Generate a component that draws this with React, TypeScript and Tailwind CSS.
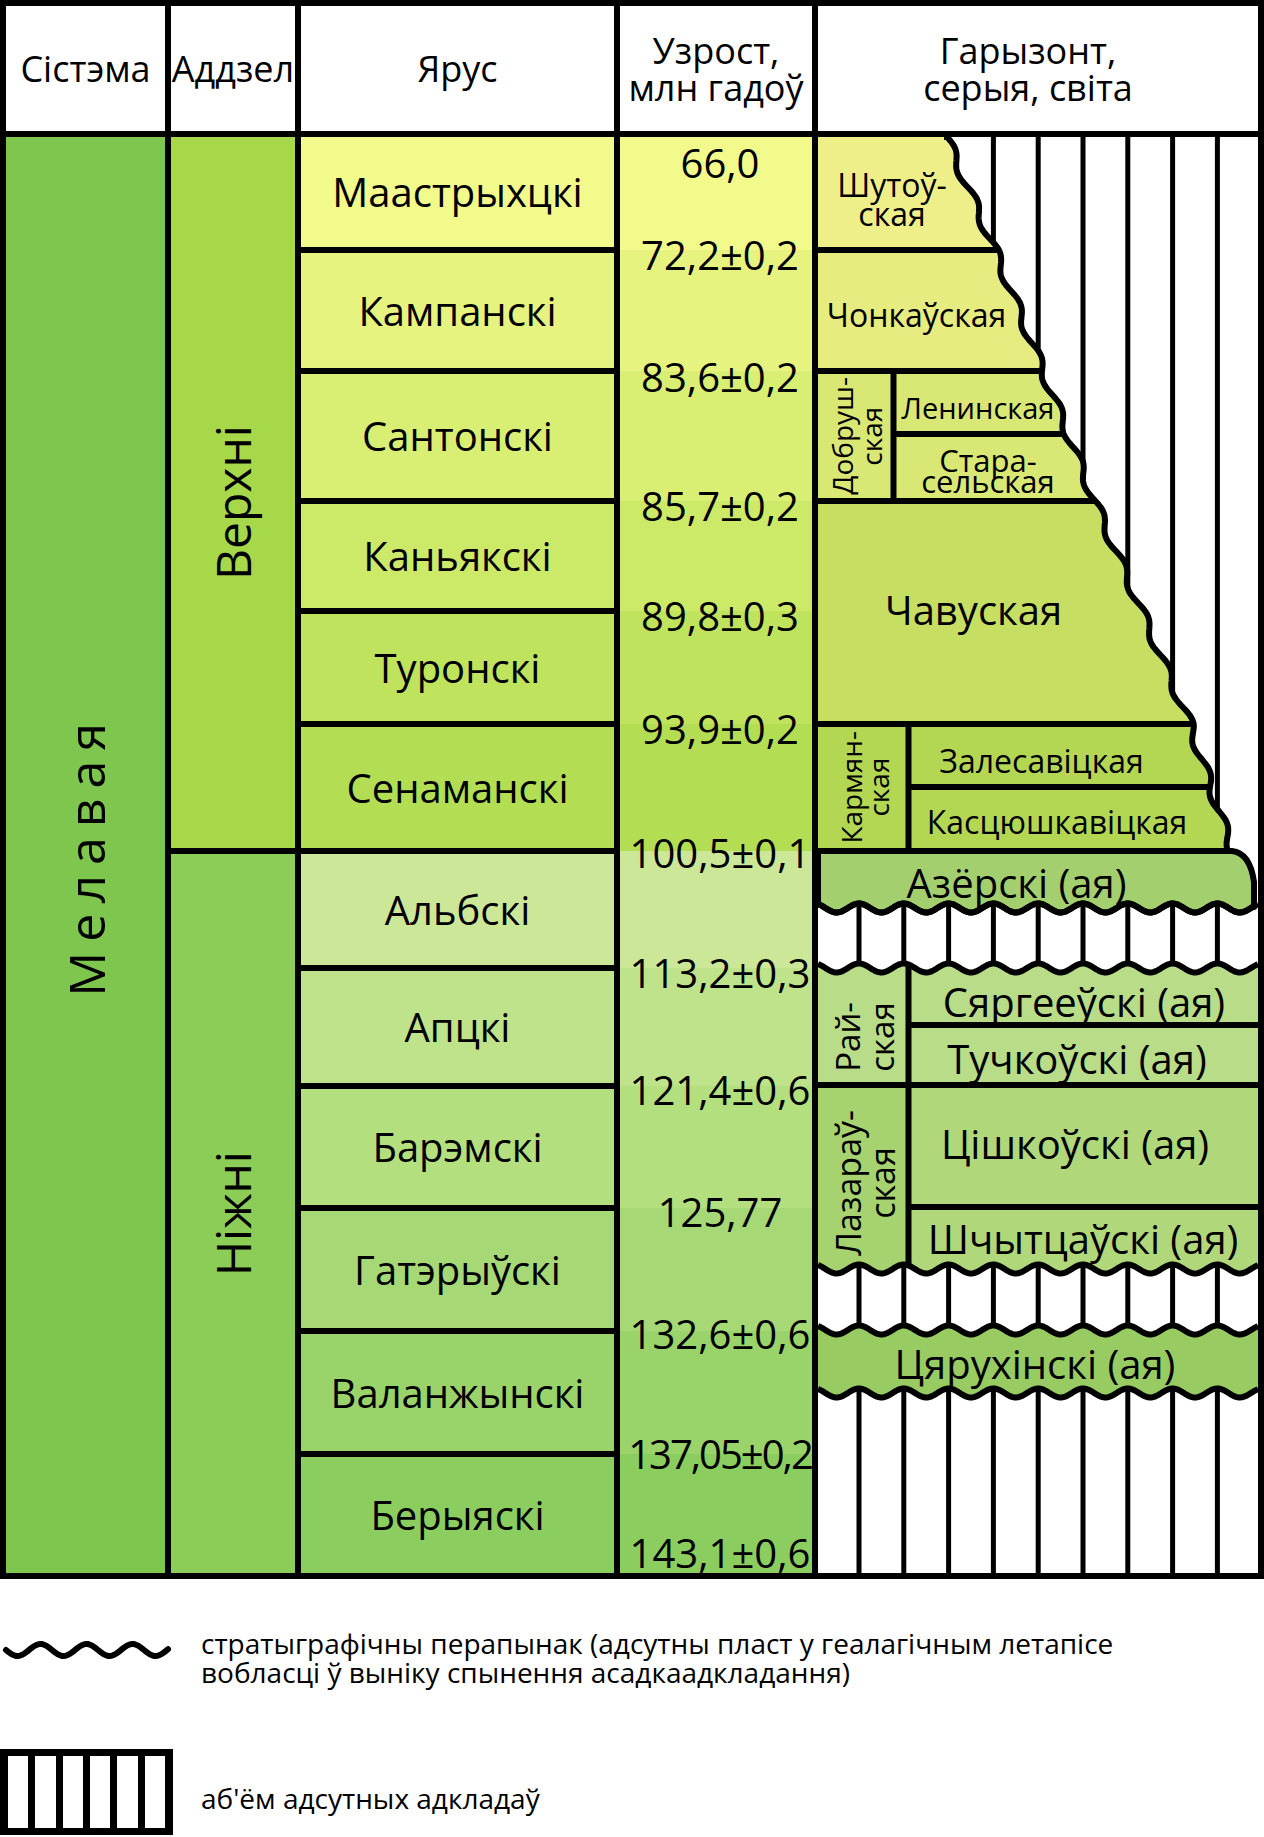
import React from "react";

const stages = [
  { name: "Маастрыхцкі", cls: "h-[116px] border-b-[6px] bg-[#f2fa8c]" },
  { name: "Кампанскі", cls: "h-[121px] border-b-[6px] bg-[#e6f47f]" },
  { name: "Сантонскі", cls: "h-[130px] border-b-[6px] bg-[#d9ef74]" },
  { name: "Каньякскі", cls: "h-[110px] border-b-[6px] bg-[#cce968]" },
  { name: "Туронскі", cls: "h-[113px] border-b-[6px] bg-[#bfe35d]" },
  { name: "Сенаманскі", cls: "h-[127px] border-b-[6px] bg-[#b3de53]" },
  { name: "Альбскі", cls: "h-[117px] border-b-[6px] bg-[#cce797]" },
  { name: "Апцкі", cls: "h-[118px] border-b-[6px] bg-[#bfe38a]" },
  { name: "Барэмскі", cls: "h-[122px] border-b-[6px] bg-[#b3df7f]" },
  { name: "Гатэрыўскі", cls: "h-[123px] border-b-[6px] bg-[#a6d975]" },
  { name: "Валанжынскі", cls: "h-[123px] border-b-[6px] bg-[#99d36a]" },
  { name: "Берыяскі", cls: "h-[116px] bg-[#8ccd60]" },
];

const bands = [
  "h-[113px] bg-[#f2fa8c]",
  "h-[121px] bg-[#e6f47f]",
  "h-[130px] bg-[#d9ef74]",
  "h-[110px] bg-[#cce968]",
  "h-[113px] bg-[#bfe35d]",
  "h-[127px] bg-[#b3de53]",
  "h-[117px] bg-[#cce797]",
  "h-[118px] bg-[#bfe38a]",
  "h-[122px] bg-[#b3df7f]",
  "h-[123px] bg-[#a6d975]",
  "h-[123px] bg-[#99d36a]",
  "h-[119px] bg-[#8ccd60]",
];

const ages = [
  { t: "66,0", cls: "top-[6px]" },
  { t: "72,2±0,2", cls: "top-[98px]" },
  { t: "83,6±0,2", cls: "top-[220px]" },
  { t: "85,7±0,2", cls: "top-[349px]" },
  { t: "89,8±0,3", cls: "top-[459px]" },
  { t: "93,9±0,2", cls: "top-[572px]" },
  { t: "100,5±0,1", cls: "top-[696px]" },
  { t: "113,2±0,3", cls: "top-[816px]" },
  { t: "121,4±0,6", cls: "top-[933px]" },
  { t: "125,77", cls: "top-[1055px]" },
  { t: "132,6±0,6", cls: "top-[1177px]" },
  { t: "137,05±0,2", cls: "top-[1297px] tracking-[-2px]" },
  { t: "143,1±0,6", cls: "top-[1396px]" },
];

// drawing helpers for the horizon column (local coords 440 x 1436)
const EDGE = [
  [128, 0],
  [176, 111],
  [225, 234],
  [276, 363],
  [372, 587],
  [393, 650],
  [414, 714],
];

function edgeX(y: number) {
  for (let i = 0; i < EDGE.length - 1; i++) {
    const [x0, y0] = EDGE[i];
    const [x1, y1] = EDGE[i + 1];
    if (y <= y1) return x0 + ((x1 - x0) * (y - y0)) / (y1 - y0);
  }
  return 414;
}

const edgePts: string[] = [];
for (let y = 0; y <= 714; y += 2) {
  const x = edgeX(y) + 4.2 * Math.sin((2 * Math.PI * y) / 52 + 0.24);
  edgePts.push(`${x.toFixed(1)},${y}`);
}
const edgeLine = "M126,0 L" + edgePts.join(" L");

const HATCH = [41, 85.8, 130.6, 175.4, 220.2, 265, 309.8, 354.6, 399.4];

function wave(c: number, from: number, to: number) {
  const pts: string[] = [];
  const step = from < to ? 2 : -2;
  for (let x = from; step > 0 ? x <= to : x >= to; x += step) {
    const y = c - 4.5 * Math.cos((2 * Math.PI * (x - 41)) / 44.8);
    pts.push(`${x},${y.toFixed(1)}`);
  }
  return pts.join(" L");
}

const upperClip = `M0,0 L126,0 L${edgePts.join(" L")} L0,714 Z`;
const azerski = `M0,714 L414,714 Q432,716 436,745 L436,770 L${wave(771, 436, 0)} Z`;
const lowerBlock = `M${wave(831, 0, 440)} L${wave(1132, 440, 0)} Z`;
const tsiaruhin = `M${wave(1193, 0, 440)} L${wave(1256, 440, 0)} Z`;

function HorizonDrawing() {
  return (
    <svg
      className="absolute inset-0"
      width={440}
      height={1436}
      viewBox="0 0 440 1436"
    >
      <defs>
        <clipPath id="upper">
          <path d={upperClip} />
        </clipPath>
        <clipPath id="lower">
          <path d={lowerBlock} />
        </clipPath>
      </defs>
      <rect x={0} y={0} width={440} height={1436} fill="#ffffff" />
      {HATCH.map((x) => (
        <line key={x} x1={x} y1={0} x2={x} y2={1436} stroke="#000" strokeWidth={5} />
      ))}

      <g clipPath="url(#upper)">
        <rect x={0} y={0} width={440} height={113} fill="#efef8a" />
        <rect x={0} y={113} width={440} height={121} fill="#e6ec7f" />
        <rect x={0} y={234} width={440} height={130} fill="#d9e874" />
        <rect x={0} y={364} width={440} height={223} fill="#c6df62" />
        <rect x={0} y={587} width={440} height={127} fill="#b3d753" />
        <g stroke="#000" strokeWidth={6}>
          <line x1={0} y1={113} x2={440} y2={113} />
          <line x1={0} y1={234} x2={440} y2={234} />
          <line x1={75.5} y1={297} x2={440} y2={297} />
          <line x1={0} y1={364} x2={440} y2={364} />
          <line x1={0} y1={587} x2={440} y2={587} />
          <line x1={90.5} y1={650} x2={440} y2={650} />
          <line x1={75.5} y1={234} x2={75.5} y2={364} />
          <line x1={90.5} y1={587} x2={90.5} y2={714} />
        </g>
      </g>
      <path d={edgeLine} fill="none" stroke="#000" strokeWidth={6} strokeLinejoin="round" />

      <path d={azerski} fill="#a3cf6e" stroke="#000" strokeWidth={6} strokeLinejoin="round" />

      <g clipPath="url(#lower)">
        <rect x={0} y={800} width={440} height={148} fill="#b9dc88" />
        <rect x={0} y={948} width={440} height={200} fill="#b0d87b" />
        <rect x={0} y={948} width={90} height={200} fill="#a6d270" />
        <g stroke="#000" strokeWidth={6}>
          <line x1={90.5} y1={888} x2={440} y2={888} />
          <line x1={0} y1={948} x2={440} y2={948} />
          <line x1={90.5} y1={1070} x2={440} y2={1070} />
          <line x1={90.5} y1={800} x2={90.5} y2={1150} />
        </g>
      </g>
      <path d={tsiaruhin} fill="#98cc62" />

      <g fill="none" stroke="#000" strokeWidth={6} strokeLinejoin="round">
        <path d={`M${wave(771, 0, 440)}`} />
        <path d={`M${wave(831, 0, 440)}`} />
        <path d={`M${wave(1132, 0, 440)}`} />
        <path d={`M${wave(1193, 0, 440)}`} />
        <path d={`M${wave(1256, 0, 440)}`} />
      </g>
    </svg>
  );
}

function VText({ lines, cls }: { lines: string[]; cls: string }) {
  return (
    <div className={`[writing-mode:vertical-rl] rotate-180 text-center whitespace-nowrap ${cls}`}>
      {lines.map((l) => (
        <div key={l}>{l}</div>
      ))}
    </div>
  );
}

function Horizons() {
  return (
    <div className="relative w-[440px] h-[1436px]">
      <HorizonDrawing />
      <div className="relative flex flex-col h-full whitespace-nowrap">
        <div className="h-[113px] w-[148px] flex flex-col items-center justify-center pt-[11px] text-[32px] leading-[29px]">
          <span>Шутоў-</span>
          <span>ская</span>
        </div>
        <div className="h-[121px] w-[197px] flex items-center justify-center pt-[9px] text-[32px] leading-none">
          Чонкаўская
        </div>
        <div className="h-[130px] flex">
          <div className="w-[78px] flex items-center justify-center">
            <VText lines={["Добруш-", "ская"]} cls="text-[28px] leading-[29px]" />
          </div>
          <div className="flex flex-col">
            <div className="h-[63px] w-[164px] flex items-center justify-center pt-[10px] text-[29px] leading-none">
              Ленинская
            </div>
            <div className="h-[67px] w-[184px] flex flex-col items-center justify-center pt-[7px] text-[31px] leading-[21px]">
              <span>Стара-</span>
              <span>сельская</span>
            </div>
          </div>
        </div>
        <div className="h-[223px] w-[311px] flex items-center justify-center pb-[5px] text-[40px] leading-none">
          Чавуская
        </div>
        <div className="h-[127px] flex">
          <div className="w-[94px] flex items-center justify-center">
            <VText lines={["Кармян-", "ская"]} cls="text-[28px] leading-[27px]" />
          </div>
          <div className="flex flex-col">
            <div className="h-[63px] w-[259px] flex items-center justify-center pt-[11px] text-[32px] leading-none">
              Залесавіцкая
            </div>
            <div className="h-[64px] w-[290px] flex items-center justify-center pt-[5px] text-[32px] leading-none">
              Касцюшкавіцкая
            </div>
          </div>
        </div>
        <div className="h-[57px] w-[397px] flex items-center justify-center pt-[6px] text-[40px] leading-none">
          Азёрскі (ая)
        </div>
        <div className="h-[60px]" />
        <div className="h-[117px] flex">
          <div className="w-[94px] flex items-center justify-center pt-[20px]">
            <VText lines={["Рай-", "ская"]} cls="text-[33px] leading-[34px]" />
          </div>
          <div className="flex flex-col">
            <div className="h-[57px] w-[344px] flex items-center justify-center pt-[10px] text-[40px] leading-none">
              Сяргееўскі (ая)
            </div>
            <div className="h-[60px] w-[330px] flex items-center justify-center pt-[7px] text-[40px] leading-none">
              Тучкоўскі (ая)
            </div>
          </div>
        </div>
        <div className="h-[184px] flex">
          <div className="w-[94px] flex items-center justify-center pt-[12px]">
            <VText lines={["Лазараў-", "ская"]} cls="text-[34px] leading-[34px]" />
          </div>
          <div className="flex flex-col">
            <div className="h-[122px] w-[326px] flex items-center justify-center pb-[5px] text-[40px] leading-none">
              Цішкоўскі (ая)
            </div>
            <div className="h-[62px] w-[342px] flex items-center justify-center pt-[2px] text-[40px] leading-none">
              Шчытцаўскі (ая)
            </div>
          </div>
        </div>
        <div className="h-[61px]" />
        <div className="h-[63px] w-[434px] flex items-center justify-center pt-[5px] text-[40px] leading-none">
          Цярухінскі (ая)
        </div>
      </div>
    </div>
  );
}

function LegendWave() {
  const pts: string[] = [];
  for (let x = 6; x <= 168; x += 2) {
    const y = 15 + 6 * Math.sin((2 * Math.PI * (x - 6)) / 46);
    pts.push(`${x},${y.toFixed(1)}`);
  }
  return (
    <svg width={172} height={30} viewBox="0 0 172 30">
      <path d={"M" + pts.join(" L")} fill="none" stroke="#000" strokeWidth={6} strokeLinecap="round" />
    </svg>
  );
}

export default function App() {
  return (
    <div className="w-[1264px] h-[1837px] overflow-hidden bg-white text-black font-['Open_Sans',sans-serif]">
      <div className="border-[6px] border-black">
        {/* header */}
        <div className="flex h-[131px] border-b-[6px] border-black text-[36px] leading-[37px]">
          <div className="w-[165px] border-r-[6px] border-black flex items-center justify-center">
            Сістэма
          </div>
          <div className="w-[130px] border-r-[6px] border-black flex items-center justify-center whitespace-nowrap">
            Аддзел
          </div>
          <div className="w-[319px] border-r-[6px] border-black flex items-center justify-center">
            Ярус
          </div>
          <div className="w-[198px] border-r-[6px] border-black flex flex-col items-center justify-center whitespace-nowrap">
            <span>Узрост,</span>
            <span>млн гадоў</span>
          </div>
          <div className="flex-1 flex flex-col items-center justify-center pr-[20px]">
            <span>Гарызонт,</span>
            <span>серыя, світа</span>
          </div>
        </div>

        {/* body */}
        <div className="flex h-[1436px]">
          <div className="w-[165px] border-r-[6px] border-black bg-[#7fc64e] flex items-center justify-center">
            <VText lines={["Мелавая"]} cls="text-[50px] leading-none tracking-[10px]" />
          </div>
          <div className="w-[130px] border-r-[6px] border-black flex flex-col">
            <div className="h-[717px] border-b-[6px] border-black bg-[#a6d84a] flex items-center justify-center pt-[20px]">
              <VText lines={["Верхні"]} cls="text-[48px] leading-none" />
            </div>
            <div className="flex-1 bg-[#8ccd57] flex items-center justify-center">
              <VText lines={["Ніжні"]} cls="text-[48px] leading-none" />
            </div>
          </div>
          <div className="w-[319px] border-r-[6px] border-black flex flex-col">
            {stages.map((s) => (
              <div
                key={s.name}
                className={`${s.cls} border-black flex items-center justify-center text-[40px] leading-none`}
              >
                {s.name}
              </div>
            ))}
          </div>
          <div className="relative w-[198px] border-r-[6px] border-black">
            <div className="flex flex-col">
              {bands.map((b) => (
                <div key={b} className={b} />
              ))}
            </div>
            {ages.map((a) => (
              <div
                key={a.t}
                className={`absolute left-0 right-[-8px] text-center text-[40px] leading-[40px] whitespace-nowrap ${a.cls}`}
              >
                {a.t}
              </div>
            ))}
          </div>
          <Horizons />
        </div>
      </div>

      {/* legend */}
      <div className="mt-[50px] flex items-start">
        <div className="mt-[6px]">
          <LegendWave />
        </div>
        <div className="ml-[29px] text-[28px] leading-[29px]">
          <p>стратыграфічны перапынак (адсутны пласт у геалагічным летапісе</p>
          <p>вобласці ў выніку спынення асадкаадкладання)</p>
        </div>
      </div>
      <div className="mt-[62px] flex items-center">
        <div className="w-[173px] h-[86px] border-[7px] border-l-[8px] border-r-[8px] border-black flex">
          <div className="flex-1" />
          <div className="flex-1 border-l-[7px] border-black" />
          <div className="flex-1 border-l-[7px] border-black" />
          <div className="flex-1 border-l-[7px] border-black" />
          <div className="flex-1 border-l-[7px] border-black" />
          <div className="flex-1 border-l-[7px] border-black" />
        </div>
        <div className="ml-[28px] pt-[12px] text-[28px] leading-[30px]">аб'ём адсутных адкладаў</div>
      </div>
    </div>
  );
}
